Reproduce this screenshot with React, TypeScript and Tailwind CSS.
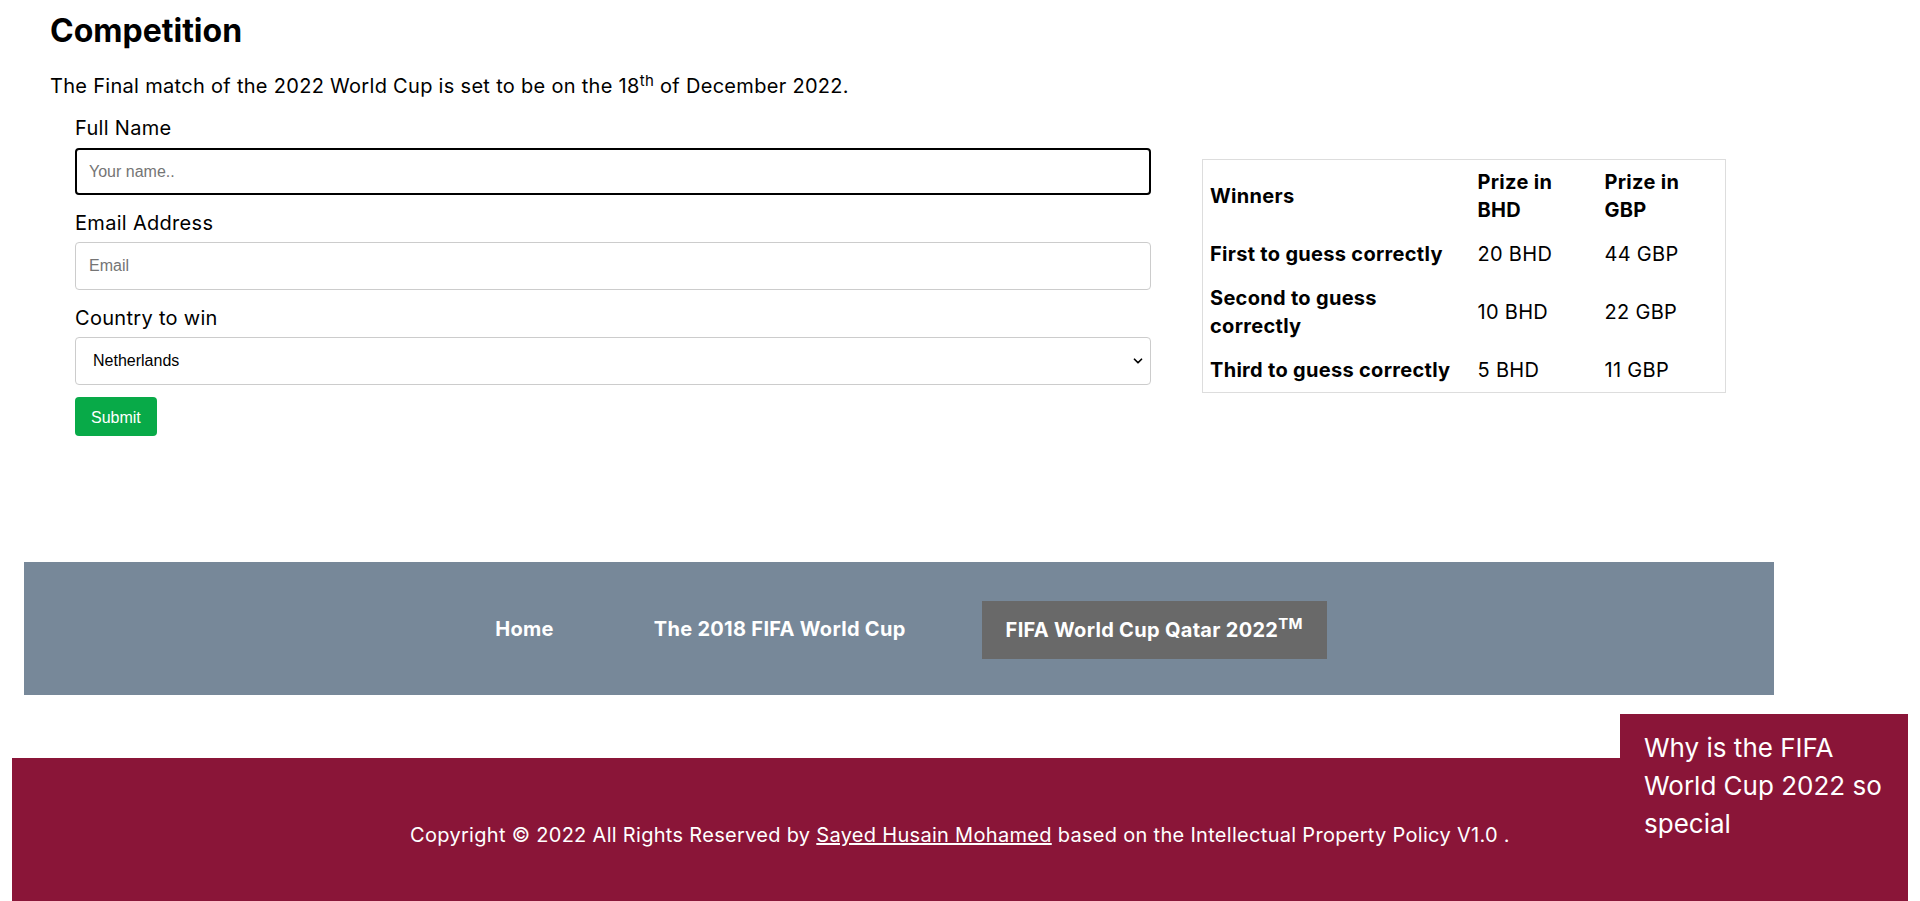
import { ChevronDown } from 'lucide-react';

const prizes = [
  { who: 'First to guess correctly', bhd: '20 BHD', gbp: '44 GBP' },
  { who: 'Second to guess correctly', bhd: '10 BHD', gbp: '22 GBP' },
  { who: 'Third to guess correctly', bhd: '5 BHD', gbp: '11 GBP' },
];

export default function App() {
  return (
    <div className="relative min-h-screen bg-white text-black font-['Inter',sans-serif] tracking-[0.3px] overflow-hidden">
      {/* Competition */}
      <section className="pl-[50px] pt-[12px]">
        <h2 className="text-[32px] leading-[38px] font-bold tracking-normal">Competition</h2>
        <p className="mt-[21px] text-[20px] leading-[30px]">
          The Final match of the 2022 World Cup is set to be on the 18
          <sup className="text-[15px]">th</sup> of December 2022.
        </p>
      </section>

      <div className="flex items-start mt-[12px]">
        <form className="ml-[75px] w-[1076px] flex flex-col">
          <label className="text-[20px] leading-[30px]">Full Name</label>
          <input
            placeholder="Your name.."
            className="mt-[5px] h-[47px] w-full rounded-[4px] border-2 border-black px-[12px] font-['Liberation_Sans',sans-serif] tracking-normal text-[16px] placeholder:text-[#757575] outline-none"
          />
          <label className="mt-[13px] text-[20px] leading-[30px]">Email Address</label>
          <input
            placeholder="Email"
            className="mt-[4px] h-[48px] w-full rounded-[4px] border border-[#ccc] px-[13px] font-['Liberation_Sans',sans-serif] tracking-normal text-[16px] placeholder:text-[#757575] outline-none"
          />
          <label className="mt-[13px] text-[20px] leading-[30px]">Country to win</label>
          <div className="relative mt-[4px]">
            <select
              defaultValue="Netherlands"
              className="h-[48px] w-full appearance-none rounded-[4px] border border-[#ccc] bg-white px-[17px] font-['Liberation_Sans',sans-serif] tracking-normal text-[16px] text-black outline-none"
            >
              <option>Argentina</option>
              <option>France</option>
              <option>Croatia</option>
              <option>Morocco</option>
              <option>Netherlands</option>
            </select>
            <ChevronDown size={14} strokeWidth={3} className="absolute right-[6px] top-[17px] text-black pointer-events-none" />
          </div>
          <div className="mt-[12px]">
            <button
              type="button"
              className="h-[39px] rounded-[4px] bg-[#08AA48] px-[16px] pt-[2px] font-['Liberation_Sans',sans-serif] tracking-normal text-[16px] text-white"
            >
              Submit
            </button>
          </div>
        </form>

        <table className="ml-[51px] mt-[46px] w-[523px] table-fixed border border-[#ddd] text-[20px] leading-[28px]">
          <colgroup>
            <col className="w-[267px]" />
            <col className="w-[127px]" />
            <col className="w-[129px]" />
          </colgroup>
          <thead>
            <tr className="text-left font-bold">
              <th className="p-[8px] pl-[7px]">Winners</th>
              <th className="p-[8px]">Prize in BHD</th>
              <th className="p-[8px]">Prize in GBP</th>
            </tr>
          </thead>
          <tbody>
            {prizes.map((p) => (
              <tr key={p.who}>
                <td className="p-[8px] pl-[7px] font-bold">{p.who}</td>
                <td className="p-[8px]">{p.bhd}</td>
                <td className="p-[8px]">{p.gbp}</td>
              </tr>
            ))}
          </tbody>
        </table>
      </div>

      {/* Navigation */}
      <nav className="ml-[24px] mt-[126px] w-[1750px] h-[133px] bg-[#778899] flex items-center justify-center gap-[52px] text-white font-bold text-[20px]">
        <a className="px-[24px] py-[14px] leading-[30px]">Home</a>
        <a className="px-[24px] py-[14px] leading-[30px]">The 2018 FIFA World Cup</a>
        <a className="px-[24px] py-[14px] leading-[30px] mt-[2px] bg-[#696969]">
          FIFA World Cup Qatar 2022<sup className="text-[15px]">TM</sup>
        </a>
      </nav>

      {/* Footer */}
      <footer className="ml-[12px] mt-[63px] w-[1896px] h-[180px] bg-[#8A1538] text-white text-[20px] leading-[30px] text-center pt-[62px]">
        Copyright © 2022 All Rights Reserved by <a className="underline">Sayed Husain Mohamed</a> based on the Intellectual Property Policy V1.0 .
      </footer>

      {/* Side box */}
      <aside className="absolute left-[1620px] top-[714px] w-[288px] h-[220px] bg-[#8A1538] text-white text-[26px] leading-[38px] tracking-normal px-[24px] pt-[15px]">
        Why is the FIFA World Cup 2022 so special
      </aside>
    </div>
  );
}
